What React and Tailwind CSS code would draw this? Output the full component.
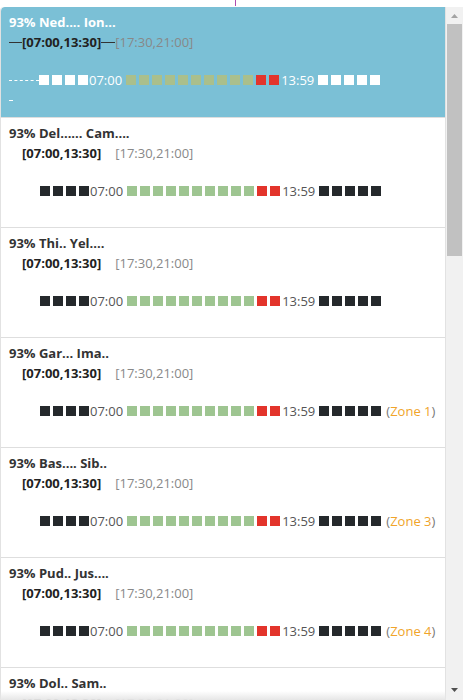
import React from "react";

const items = [
  { name: "93% Ned.... Ion...", selected: true },
  { name: "93% Del...... Cam...." },
  { name: "93% Thi.. Yel...." },
  { name: "93% Gar... Ima..", zone: "Zone 1" },
  { name: "93% Bas.... Sib..", zone: "Zone 3" },
  { name: "93% Pud.. Jus....", zone: "Zone 4" },
  { name: "93% Dol.. Sam.." },
];

function Dash({ w, color, dashed }) {
  return (
    <span className={`inline-flex items-center shrink-0 ${w}`}>
      <span
        className={`block w-full ${
          dashed ? "border-t border-dashed border-white" : `h-px ${color}`
        }`}
      />
    </span>
  );
}

function Squares({ count, color, last }) {
  return Array.from({ length: count }).map((_, i) => (
    <span
      key={i}
      className={`block w-[10px] h-[10px] shrink-0 ${color} ${
        i === count - 1 && last ? "" : "mr-[3px]"
      }`}
    />
  ));
}

function Item({ item }) {
  const sel = item.selected;
  const edge = sel ? "bg-white" : "bg-[#25292c]";
  const green = sel ? "bg-[#aabf8c]" : "bg-[#9ec591]";
  const timeColor = sel ? "text-white" : "text-[#555]";
  return (
    <div
      className={`px-2 pt-[6px] border-b border-[#dedede] ${
        sel ? "bg-[#7bc0d6] rounded-tl-[4px] h-[111px]" : "bg-white h-[110px]"
      }`}
    >
      <div className={`text-[13px] leading-[18px] font-bold ${sel ? "text-white" : "text-[#333]"}`}>
        {item.name}
      </div>
      <div className="flex items-center text-[13px] leading-[20px] mt-px">
        {sel ? <Dash w="w-[13px]" color="bg-[#333]" /> : <span className="w-[13px]" />}
        <span className="font-bold text-[#222]">[07:00,13:30]</span>
        {sel ? <Dash w="w-[14px]" color="bg-[#333]" /> : <span className="w-[14px]" />}
        <span className="text-[#888]">[17:30,21:00]</span>
      </div>
      <div className="flex items-center mt-[18px] h-[20px] text-[13px] whitespace-nowrap">
        {sel ? <Dash w="w-[30px]" dashed /> : <span className="w-[31px] shrink-0" />}
        <Squares count={4} color={edge} last />
        <span className={`${timeColor} leading-[20px] ml-px mr-[4px]`}>07:00</span>
        <Squares count={10} color={green} />
        <Squares count={2} color="bg-[#e3342b]" last />
        <span className={`${timeColor} leading-[20px] ml-[2px] mr-[4px]`}>13:59</span>
        <Squares count={5} color={edge} />
        {item.zone && (
          <span className="ml-[2px] text-[#777] leading-[20px] shrink-0">
            (<span className="text-[#f0a42a]">{item.zone}</span>)
          </span>
        )}
      </div>
      {sel && (
        <div className="flex items-center h-[16px] mt-[2px]">
          <Dash w="w-[4px]" color="bg-white" />
        </div>
      )}
    </div>
  );
}

export default function App() {
  return (
    <div
      className="relative w-[470px] h-[700px] bg-white overflow-hidden"
      style={{ fontFamily: '"Open Sans", "Liberation Sans", sans-serif' }}
    >
      <div className="absolute left-[235px] top-0 w-px h-[6px] bg-[#b04cb0]" />
      <div className="pt-[7px] flex h-[700px]">
        <div className="relative flex w-[463px] h-[693px] overflow-hidden">
          <div className="w-[446px] border-l border-r border-[#e2e2e2] rounded-tl-[4px] overflow-hidden">
            {items.map((it, i) => (
              <Item key={i} item={it} />
            ))}
          </div>
          <div className="w-[17px] bg-[#f1f1f1] flex flex-col items-center">
            <div className="h-[17px] flex items-center justify-center">
              <svg width="7" height="4" viewBox="0 0 7 4">
                <path d="M0 4 L3.5 0 L7 4 Z" fill="#a3a3a3" />
              </svg>
            </div>
            <div className="w-[15px] h-[232px] bg-[#c1c1c1]" />
            <div className="flex-1" />
            <div className="h-[17px] flex items-start justify-center pt-[5px]">
              <svg width="7" height="4" viewBox="0 0 7 4">
                <path d="M0 0 L7 0 L3.5 4 Z" fill="#505050" />
              </svg>
            </div>
          </div>
          <div className="absolute left-0 bottom-0 w-[446px] h-[9px] bg-gradient-to-b from-transparent to-[#e6e6e6]" />
        </div>
      </div>
    </div>
  );
}
